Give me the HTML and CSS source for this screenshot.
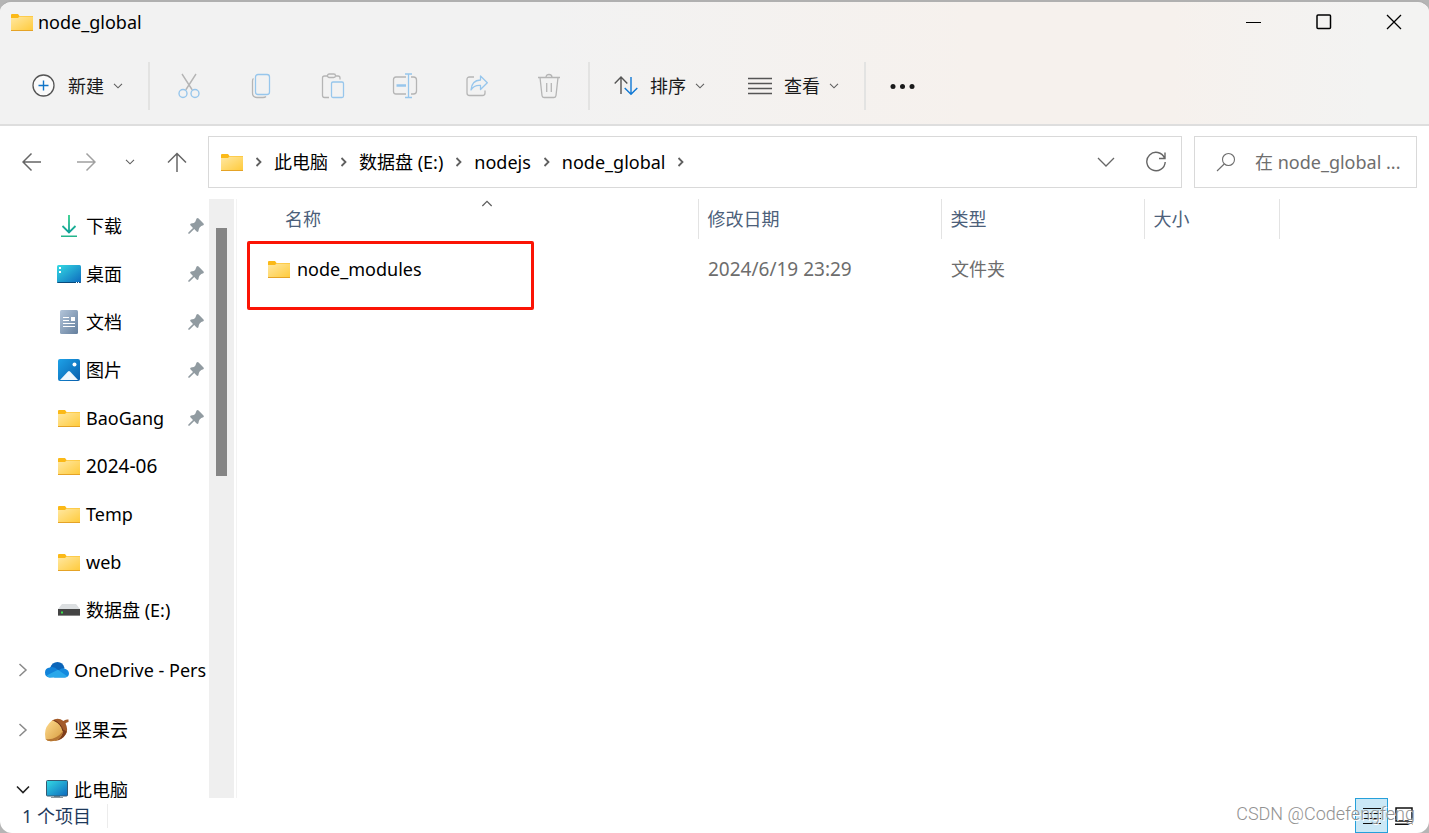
FILE: index.html
```html
<!DOCTYPE html>
<html lang="zh-CN">
<head>
<meta charset="utf-8">
<title>node_global</title>
<link rel="stylesheet" href="styles.css">
</head>
<body>
<svg class="defs" aria-hidden="true">
  <defs>
    <linearGradient id="gFolder" x1="0" y1="0" x2="1" y2="1"><stop offset="0" stop-color="#ffe8a3"/><stop offset="1" stop-color="#ffcb3d"/></linearGradient>
    <linearGradient id="gDown" x1="0" y1="0" x2="0" y2="1"><stop offset="0" stop-color="#2fd08a"/><stop offset="1" stop-color="#109f99"/></linearGradient>
    <linearGradient id="gDesk" x1="0" y1="0" x2="1" y2="1"><stop offset="0" stop-color="#34dbe4"/><stop offset="1" stop-color="#0d68bd"/></linearGradient>
    <linearGradient id="gDoc" x1="0" y1="0" x2="1" y2="1"><stop offset="0" stop-color="#b3c5da"/><stop offset="1" stop-color="#647f9d"/></linearGradient>
    <linearGradient id="gPic" x1="0" y1="0" x2="1" y2="1"><stop offset="0" stop-color="#1da2e8"/><stop offset="1" stop-color="#075dab"/></linearGradient>
    <linearGradient id="gNut" x1="0" y1="0" x2="1" y2="1"><stop offset="0" stop-color="#ffdc8f"/><stop offset="1" stop-color="#d59a3e"/></linearGradient>
    <symbol id="folder" viewBox="0 0 22 18"><path d="M0 2Q0 1 1 1H7L8.500 3H22V7H0Z" fill="#fbb917"/><path d="M0 5H7L8.500 3.500H22V17H0Z" fill="url(#gFolder)"/><path d="M0 17.500H22" stroke="#e5a326"/></symbol>
    <symbol id="pin" viewBox="0 0 16 16"><path d="M8.600 .6Q9.600 -.3 10.600 .5L15.500 5.400Q16.300 6.400 15.300 7.200L13.300 8Q11.200 9.500 10.900 11L10.400 13.300Q9.700 14.400 8.600 13.500L6.200 11.100L1.700 15.500Q.6 16.200 .3 15.500T.6 14.200L5 9.900L2.400 7.300Q1.700 6.100 3 5.500L5.800 5.100Q7.300 4.600 8 2Z" fill="#919ba1"/></symbol>
    <symbol id="chev" viewBox="0 0 10 6"><path d="M1 .8L5 4.800L9 .8" fill="none" stroke="#5f5f5f" stroke-width="1.100"/></symbol>
    <symbol id="crumb" viewBox="0 0 7 10"><path d="M1.500 1L5.500 5L1.500 9" fill="none" stroke="#606060" stroke-width="1.800"/></symbol>
    <symbol id="expand" viewBox="0 0 9 14"><path d="M1 1L7.500 7L1 13" fill="none" stroke="#8a8a8a" stroke-width="1.500"/></symbol>
  </defs>
</svg>
<div class="window">
  <header class="head">
    <div class="titlebar">
      <svg class="folder"><use href="#folder"/></svg>
      <h1 class="title">node_global</h1>
      <button class="caption" aria-label="最小化"><svg width="16" height="16"><path d="M0 8.500H15" stroke="#000"/></svg></button>
      <button class="caption" aria-label="最大化"><svg width="16" height="16"><rect x="1" y="1" width="13.500" height="13.500" rx="1" fill="none" stroke="#000" stroke-width="1.500"/></svg></button>
      <button class="caption" aria-label="关闭"><svg width="16" height="16"><path d="M1 1L15 15M15 1L1 15" stroke="#000" stroke-width="1.300"/></svg></button>
    </div>
    <div class="toolbar">
      <button class="tool">
        <svg width="24" height="24" fill="none"><circle cx="11.500" cy="11.500" r="10.500" fill="#fafafa" stroke="#555" stroke-width="1.300"/><path d="M11.500 6.500V16.500M6.500 11.500H16.500" stroke="#0f74c8" stroke-width="1.400"/></svg>
        <span>新建</span><svg class="chev"><use href="#chev"/></svg>
      </button>
      <span class="sep"></span>
      <div class="edits">
        <button class="edit" aria-label="剪切"><svg width="24" height="26" fill="none" stroke-width="1.400"><path d="M5 1L15.300 17M19 1L8.700 17" stroke="#b5b5b5"/><circle cx="6" cy="20.500" r="4" stroke="#97c6ec"/><circle cx="18" cy="20.500" r="4" stroke="#97c6ec"/></svg></button>
        <button class="edit" aria-label="复制"><svg width="22" height="26" fill="none" stroke-width="1.300"><path d="M3.500 5.500Q2.500 6 2.500 8V20Q2.500 24.500 7 24.500H13Q15 24.500 16 23.500" stroke="#b5b5b5"/><rect x="5.500" y="1.500" width="14" height="20" rx="2.500" stroke="#97c6ec"/></svg></button>
        <button class="edit" aria-label="粘贴"><svg width="24" height="26" fill="none" stroke-width="1.300"><path d="M8 24.500H3.500Q1.500 24.500 1.500 22.500V5Q1.500 3 3.500 3H6.500M15 3H17Q19 3 19 5V6.500" stroke="#b5b5b5"/><rect x="6.500" y="1" width="8" height="3.500" rx="1.700" stroke="#b5b5b5"/><rect x="10.500" y="9" width="12" height="15.500" rx="1.500" stroke="#97c6ec"/></svg></button>
        <button class="edit" aria-label="重命名"><svg width="26" height="26" fill="none" stroke-width="1.300"><path d="M14 4H4Q1.500 4 1.500 6.500V18.500Q1.500 21 4 21H14M19 4H21.500Q24.500 4 24.500 7V18Q24.500 21 21.500 21H19" stroke="#b5b5b5"/><path d="M13 1H20M13 24.500H20M16.500 1V24.500" stroke="#97c6ec"/><path d="M4.500 12.500H14" stroke="#97c6ec" stroke-width="2.400"/></svg></button>
        <button class="edit" aria-label="共享"><svg width="22" height="26" fill="none" stroke-width="1.300" stroke-linejoin="round"><path d="M8 4H3.500Q1 4 1 6.500V20Q1 22.500 3.500 22.500H16.500Q19 22.500 19 20V17.500" stroke="#b5b5b5"/><path d="M14.500 3L21.300 9.700L14.500 16.500V12.500Q8 12 5 17Q5.500 7.500 14.500 7Z" stroke="#97c6ec"/></svg></button>
        <button class="edit" aria-label="删除"><svg width="24" height="26" fill="none" stroke="#b5b5b5" stroke-width="1.300"><path d="M1 4.500H23M3 4.500L5 22.500Q5.200 24.500 7 24.500H17Q18.800 24.500 19 22.500L21 4.500M9 4.500Q9 1.500 12 1.500T15 4.500M9.700 10V19M14.300 10V19"/></svg></button>
      </div>
      <span class="sep"></span>
      <button class="tool">
        <svg width="24" height="24" fill="none" stroke-width="1.400"><path d="M7 20V3M.7 9.500L7 3L13.300 9.500" stroke="#555"/><path d="M17 3V20M10.700 14L17 20.300L23.300 14" stroke="#0f78d4"/></svg>
        <span>排序</span><svg class="chev"><use href="#chev"/></svg>
      </button>
      <button class="tool">
        <svg width="24" height="24" stroke="#555" stroke-width="1.300"><path d="M0 4.500H24M0 9.500H24M0 14.500H24M0 19.500H24"/></svg>
        <span>查看</span><svg class="chev"><use href="#chev"/></svg>
      </button>
      <span class="sep"></span>
      <button class="tool" aria-label="更多"><svg width="26" height="24" fill="#1a1a1a"><circle cx="3" cy="12.500" r="2.500"/><circle cx="12.500" cy="12.500" r="2.500"/><circle cx="22" cy="12.500" r="2.500"/></svg></button>
    </div>
  </header>

  <nav class="navrow" aria-label="导航">
    <div class="arrows">
      <button class="arrow" aria-label="后退"><svg width="20" height="20" fill="none" stroke="#666" stroke-width="1.500"><path d="M19 10H1M9.500 1.500L1 10L9.500 18.500"/></svg></button>
      <button class="arrow" aria-label="前进"><svg width="20" height="20" fill="none" stroke="#a0a0a0" stroke-width="1.500"><path d="M1 10H19M10.500 1.500L19 10L10.500 18.500"/></svg></button>
      <button class="arrow" aria-label="最近浏览的位置"><svg class="chev"><use href="#chev"/></svg></button>
      <button class="arrow" aria-label="上移"><svg width="20" height="20" fill="none" stroke="#666" stroke-width="1.500"><path d="M10 20V1.500M1 10.500L10 1.500L19 10.500"/></svg></button>
    </div>
    <div class="address">
      <svg class="folder"><use href="#folder"/></svg>
      <svg class="crumb"><use href="#crumb"/></svg><a class="place" href="#">此电脑</a>
      <svg class="crumb"><use href="#crumb"/></svg><a class="place" href="#">数据盘 (E:)</a>
      <svg class="crumb"><use href="#crumb"/></svg><a class="place" href="#">nodejs</a>
      <svg class="crumb"><use href="#crumb"/></svg><a class="place" href="#">node_global</a>
      <svg class="crumb"><use href="#crumb"/></svg>
      <button class="history" aria-label="以前的位置"><svg width="18" height="10" fill="none" stroke="#666" stroke-width="1.300"><path d="M1 1L9 9L17 1"/></svg></button>
      <button class="refresh" aria-label="刷新"><svg width="22" height="22" fill="none" stroke="#666" stroke-width="1.400"><path d="M19.500 7A9.200 9.200 0 1 0 20.200 11M20 1.500V7.500H14"/></svg></button>
    </div>
    <label class="search">
      <svg width="20" height="20" fill="none" stroke="#6e6e6e" stroke-width="1.100"><circle cx="12.500" cy="7.500" r="6"/><path d="M8.200 12L1 19"/></svg>
      <input class="query" type="text" placeholder="在 node_global ..." aria-label="搜索">
    </label>
  </nav>

  <div class="body">
    <aside class="tree">
      <ul class="list">
        <li class="quick"><svg class="ico" viewBox="0 0 24 24" fill="none" stroke="url(#gDown)" stroke-width="1.800"><path d="M12 1L12.010 18.500M5.500 12L12 18.500L18.500 12"/><path d="M4 21.500H20V23H4Z" fill="#24b58c" stroke="none"/></svg><span>下载</span><svg class="pin"><use href="#pin"/></svg></li>
        <li class="quick"><svg class="ico" viewBox="0 0 24 24"><rect y="3" width="24" height="18" rx="1.500" fill="url(#gDesk)"/><path d="M0 20H24Q24 21 22.500 21H1.500Q0 21 0 20Z" fill="#084a7b"/><path d="M2 5H4V7H2ZM2 9H4V11H2ZM19 20H20V21H19ZM21 20H22V21H21Z" fill="#fff"/></svg><span>桌面</span><svg class="pin"><use href="#pin"/></svg></li>
        <li class="quick"><svg class="ico" viewBox="0 0 24 24"><rect x="3" width="18" height="24" rx="1.500" fill="url(#gDoc)"/><path d="M6 7.500H12M6 10.500H12M6 13.500H18M6 16.500H18" stroke="#fff" stroke-width="1.200"/><path d="M14 7H18V11H14Z" fill="#fff"/></svg><span>文档</span><svg class="pin"><use href="#pin"/></svg></li>
        <li class="quick"><svg class="ico" viewBox="0 0 24 24"><rect x="1" y="1" width="22" height="22" rx="2" fill="url(#gPic)"/><path d="M3 22L11 13.500Q12 12.500 13 13.500L21 22Z" fill="#eff7fd"/><circle cx="17.500" cy="6.500" r="2" fill="#fff"/></svg><span>图片</span><svg class="pin"><use href="#pin"/></svg></li>
        <li class="quick"><svg class="folder"><use href="#folder"/></svg><span>BaoGang</span><svg class="pin"><use href="#pin"/></svg></li>
        <li class="quick"><svg class="folder"><use href="#folder"/></svg><span class="wide">2024-06</span></li>
        <li class="quick"><svg class="folder"><use href="#folder"/></svg><span>Temp</span></li>
        <li class="quick"><svg class="folder"><use href="#folder"/></svg><span>web</span></li>
        <li class="quick"><svg class="ico" viewBox="0 0 24 24"><path d="M5 6H19L23 11H1Z" fill="#dcdfe1"/><path d="M1 11H23V18H1Z" fill="#444"/><path d="M1 17.500H23" stroke="#888"/><path d="M4 13.500H6V15.500H4Z" fill="#3be04b"/></svg><span>数据盘 (E:)</span></li>
        <li class="root"><svg class="expand"><use href="#expand"/></svg><svg class="ico" viewBox="0 0 24 24"><path d="M5 10Q7 4 12.500 4T19.500 10L12 17Z" fill="#0a64b8"/><path d="M4.500 19.500Q0 19 0 14.500T5 9.500Q9 8 13 12L18 18Z" fill="#1182d9"/><path d="M12 15Q15 9.500 19.500 10.500Q24 12 24 15.500T20 19.500H9Z" fill="#1389de"/><path d="M1.500 17.500L13 11.800L22.500 18.500Q21.500 19.500 19.500 19.500H5Q2.500 19.500 1.500 17.500Z" fill="#29a7ea"/></svg><span>OneDrive - Pers</span></li>
        <li class="root"><svg class="expand"><use href="#expand"/></svg><svg class="ico" viewBox="0 0 24 24"><path d="M7 2.500Q13 -1 18.500 3Q20 1 23.500 1.500V4Q21.500 4 20.500 5.500Q23.500 11 21 16Q17.500 22 10 23Z" fill="#a35a28"/><path d="M17 11L21.800 13.500Q19.500 20 13 22Z" fill="#7d3d1b"/><path d="M0 16Q0 8 7 2.500Q10 2.500 13 5.500Q17 9 18 13Q17 20 11 22.500Q3 24.500 .5 21Z" fill="url(#gNut)"/><path d="M18 13Q17 20 11 22.500Q3 24.500 .5 21Q11 22.500 18 13Z" fill="#b57533"/><path d="M9 2.500Q16 5 18 13" fill="none" stroke="#6f3518"/></svg><span>坚果云</span></li>
        <li class="root"><svg width="14" height="10" fill="none" stroke="#222" stroke-width="1.600"><path d="M1 1.500L7 7.500L13 1.500"/></svg><svg class="ico" viewBox="0 0 24 24"><path d="M9 18H15V19H18V20H6V19H9Z" fill="#8b969c"/><rect x="1.500" y="2.500" width="21" height="15.500" rx="1" fill="url(#gDesk)" stroke="#365a72"/></svg><span>此电脑</span></li>
      </ul>
    </aside>
    <div class="scroll"><div class="thumb"></div></div>
    <main class="files">
      <table class="table">
        <colgroup><col class="cName"><col class="cDate"><col class="cType"><col class="cSize"><col></colgroup>
        <thead><tr><th class="name" aria-sort="ascending">名称<svg class="sorted"><use href="#chev"/></svg></th><th>修改日期</th><th>类型</th><th>大小</th><th></th></tr></thead>
        <tbody><tr><td class="file"><span class="entry"><svg class="folder"><use href="#folder"/></svg>node_modules</span></td><td class="wide">2024/6/19 23:29</td><td>文件夹</td><td></td><td></td></tr></tbody>
      </table>
      <div class="mark"></div>
    </main>
  </div>

  <footer class="status">
    <span class="count">1 个项目</span>
    <div class="views">
      <button class="view active" aria-label="详细信息"><svg width="20" height="18" stroke="#111" stroke-width="1.200"><path d="M1 1.500H19M1 6.500H19M1 11.500H19M1 16.500H19"/></svg></button>
      <button class="view" aria-label="大图标"><svg width="20" height="18" fill="none" stroke="#111" stroke-width="1.500"><path d="M2 1H18V14H2ZM1 17.250H19"/></svg></button>
    </div>
    <span class="credit">CSDN @Codefengfeng</span>
  </footer>
</div>
</body>
</html>
```
FILE: styles.css
```css
* { box-sizing: border-box; }
body {
  margin: 0;
  background: #b5b5b5;
  color: #000;
  font: 18px/24px "Noto Sans", "Noto Sans CJK SC", sans-serif;
}
button {
  display: flex;
  align-items: center;
  justify-content: center;
  padding: 0;
  border: 0;
  background: none;
  color: inherit;
  font: inherit;
}
svg { display: block; flex: none; }
.defs { position: absolute; width: 0; height: 0; }
.folder { width: 22px; height: 18px; }
.chev { width: 10px; height: 6px; }
.wide { font-size: 19px; }
.window {
  display: flex;
  flex-direction: column;
  height: 100vh;
  border-top: 2px solid #b0b0b0;
  border-radius: 12px;
  background: #fff;
  overflow: hidden;
}
.head {
  border-bottom: 2px solid #dedede;
  background: linear-gradient(90deg, #f2f2f2 38%, #f6f1ed 68%, #f6f1ed 82%, #f3f3f2 96%);
}
.titlebar { display: flex; align-items: center; height: 40px; padding-left: 11px; }
.title { flex: 1; margin: 0 0 0 5px; font-size: 18px; font-weight: 400; }
.caption { width: 70px; height: 40px; }
.toolbar { display: flex; align-items: center; height: 82px; padding: 5px 0 0 32px; color: #1a1a1a; }
.tool { gap: 12px; height: 48px; }
.tool .chev { margin-left: -3px; }
.sep { width: 2px; height: 48px; margin: 0 24px 0 25px; background: #e3e3e2; }
.edits { display: flex; margin: 0 -22px 0 -21px; }
.edit { width: 72px; height: 48px; }
.tool + .tool { margin-left: 43px; }
.navrow { display: flex; gap: 12px; padding: 10px 12px 11px 0; }
.arrows { display: flex; align-items: center; width: 196px; padding-left: 22px; }
.arrow { height: 40px; }
.arrow:nth-child(2) { margin-left: 34px; }
.arrow:nth-child(3) { margin-left: 29px; }
.arrow:nth-child(4) { margin-left: 32px; }
.address {
  display: flex;
  flex: 1;
  align-items: center;
  height: 52px;
  padding-left: 12px;
  border: 1px solid #d9d9d9;
}
.crumb { width: 7px; height: 10px; margin: 0 12px; }
.place { color: inherit; text-decoration: none; white-space: nowrap; }
.history { width: 50px; height: 48px; margin-left: auto; }
.refresh { width: 50px; height: 48px; }
.search {
  display: flex;
  align-items: center;
  gap: 19px;
  width: 223px;
  padding: 0 8px 0 21px;
  border: 1px solid #d9d9d9;
}
.query { flex: 1; min-width: 0; padding: 0; border: 0; outline: 0; background: none; font: inherit; }
.query::placeholder { color: #6e6e6e; }
.body { display: flex; flex: 1; min-height: 0; }
.tree { width: 209px; overflow: hidden; }
.list { margin: 0; padding: 3px 0 0; list-style: none; }
.quick, .root { display: flex; align-items: center; white-space: nowrap; }
.quick { gap: 5px; height: 48px; padding: 0 5px 0 57px; }
.quick .folder { margin: 0 1px; }
.root { gap: 5px; height: 60px; padding-left: 16px; }
.quick + .root { margin-top: 6px; }
.root .ico { margin-left: 10px; }
.ico { width: 24px; height: 24px; }
.expand { width: 14px; height: 14px; }
.pin { width: 16px; height: 16px; margin-left: auto; }
.scroll { width: 25px; padding: 29px 7px 0; background: #efefef; }
.thumb { height: 248px; background: #858585; }
.files { position: relative; flex: 1; margin-left: 2px; border-left: 1px solid #f3f3f3; }
.table { width: 100%; border-collapse: collapse; table-layout: fixed; }
.cName { width: 461px; }
.cDate { width: 243px; }
.cType { width: 203px; }
.cSize { width: 135px; }
.table th {
  height: 40px;
  padding: 0 9px;
  border-left: 1px solid #e3e3e3;
  color: #4c607a;
  font-weight: 400;
  text-align: left;
}
.table th.name { position: relative; padding-left: 48px; border-left: 0; }
.sorted { position: absolute; top: 1px; left: 244px; width: 12px; height: 7px; transform: rotate(180deg); }
.table td { height: 60px; padding: 0 9px 0 10px; color: #6d6d6d; }
.table td.file { padding-left: 31px; color: #000; }
.entry { display: flex; align-items: center; gap: 7px; }
.mark {
  position: absolute;
  top: 42px;
  left: 10px;
  width: 287px;
  height: 69px;
  border: 3px solid #fb1405;
  border-radius: 2px;
}
.status { position: relative; display: flex; align-items: center; height: 35px; padding: 0 11px 0 22px; color: #1e395b; }
.count { padding-right: 16px; border-right: 1px solid #ececec; }
.views { display: flex; gap: 2px; height: 100%; margin-left: auto; }
.view { width: 28px; height: 100%; }
.view.active { width: 33px; border: 1px solid #26a0da; background: #cbe8f6; }
.credit {
  position: absolute;
  top: 4px;
  right: 14px;
  color: #929292;
  font: 300 18px/24px Roboto, sans-serif;
  text-shadow: 1px 1px 0 #fff;
}
```
